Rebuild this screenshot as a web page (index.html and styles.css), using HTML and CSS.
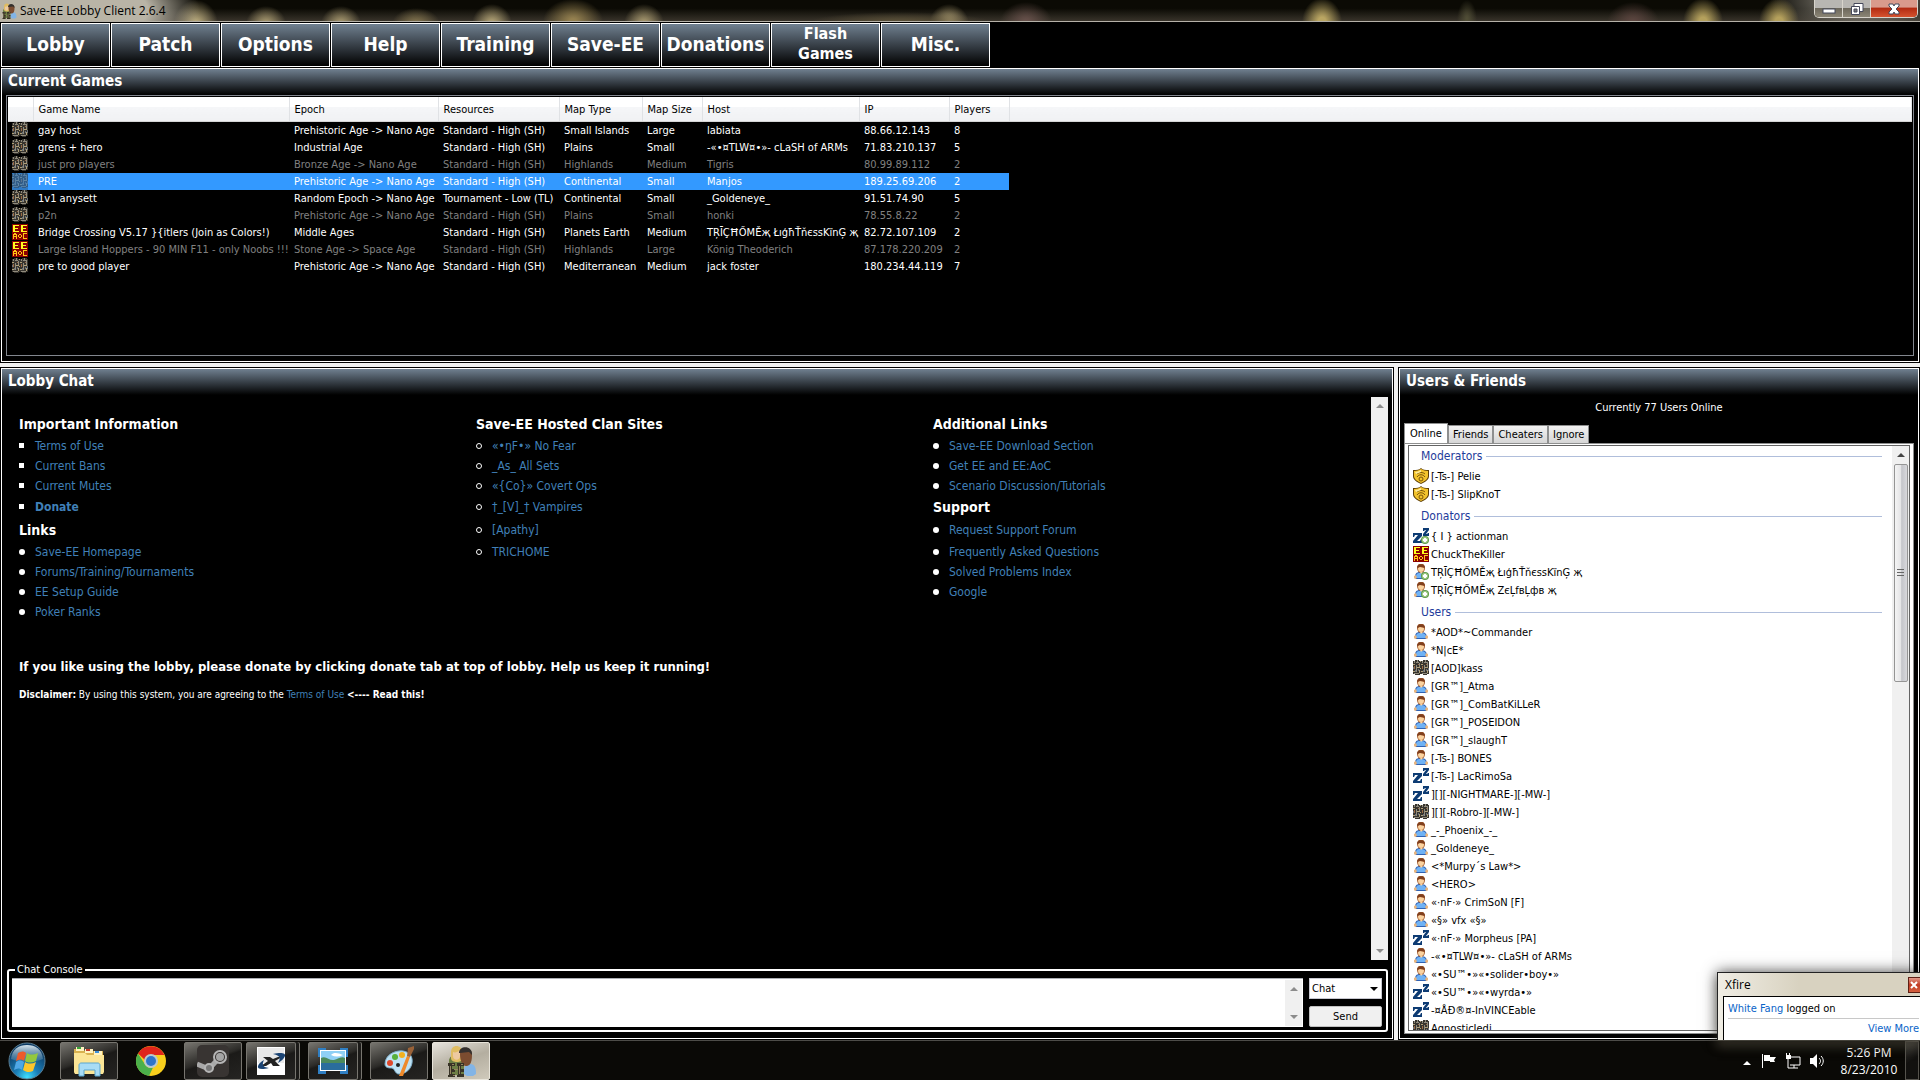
FILE: index.html
```html
<!DOCTYPE html>
<html lang="en">
<head>
    <meta charset="UTF-8">
    <meta name="viewport" content="width=device-width, initial-scale=1.0">
    <title>Save-EE Lobby Client 2.6.4</title>
    <link rel="stylesheet" href="styles.css">
</head>
<body>
    <!-- shared icons -->
    <svg class="sprite" aria-hidden="true">
        <symbol id="ee" viewBox="0 0 16 16">
            <path d="M0 1h2V0h4v1h4V0h5v1h1v13h-2v1h-4v-1H7v1H2v-1H0z" fill="#37342e"/>
            <path d="M1 1h1v2H1zM3 2h3v1H3zM4 0h1v2H4zM6 3h1v4H6zM9 1h1v2H9zM11 2h4v1h-4zM12 0h1v2h-1zM14 3h1v4h-1zM3 5h1v7H3zM11 5h1v7h-1zM1 13h5v1H1zM9 13h5v1H9z" fill="#8f8a7c"/>
            <path d="M0 4h2v1H0zM8 4h2v1H8zM4 7h3v1H4zM12 7h3v1h-3zM6 10h1v3H6zM14 10h1v3h-1zM0 11h2v1H0zM8 11h2v1H8zM7 1h1v1H7zM7 8h1v1H7z" fill="#b0a078"/>
            <path d="M1 6h1v3H1zM9 6h1v3H9zM5 4h1v1H5zM13 4h1v1h-1z" fill="#9c6a44"/>
            <path d="M5 9h1v2H5zM13 9h1v2h-1zM2 10h1v2H2zM10 10h1v2h-1zM0 7h1v2H0zM15 8h1v3h-1z" fill="#68707a"/>
        </symbol>
        <symbol id="aoc" viewBox="0 0 16 16">
            <rect width="16" height="16" fill="#8c0000"/>
            <path d="M1 1h6v1H3v2h3v1H3v2h4v1H1zM9 1h6v1h-4v2h3v1h-3v2h4v1H9z" fill="#ffff1e"/>
            <path d="M2 9h2v1h1v5H4v-2H2v2H1v-5h1zM2 11v1h2v-1zM7 10h2v1h1v2H9v1H7v-1H6v-2h1zM7 11v2h2v-2zM11 9h4v1h-3v4h3v1h-4z" fill="#ffc814"/>
        </symbol>
        <symbol id="user" viewBox="0 0 16 16">
            <path d="M2 14c0-4 1-6 5-6h1c4 0 6 2 6 6l-1 1H3z" fill="#2f62b4"/>
            <path d="M3 13c0-3 1-4 4-4h1c3 0 5 1 5 4l-1 1H4z" fill="#6fb2f5"/>
            <path d="M1 12l2-1 1 3-2 1-1-1zM15 12l-2-1-1 3 2 1 1-1z" fill="#e9b57e"/>
            <path d="M4 4c0-6 8-6 8 0 0 3-2 5-4 5S4 7 4 4z" fill="#a35b2d"/>
            <path d="M5 4l2-1 4 1c0 3-1 4-3 4S5 7 5 4z" fill="#fbd3a0"/>
            <path d="M4 4c0-5 8-5 8 0l-2-1H6z" fill="#7f3f1e"/>
            <path d="M7 8l1 2 2-2z" fill="#fbd3a0"/>
        </symbol>
        <symbol id="plus" viewBox="0 0 16 16">
            <circle cx="12" cy="12" r="4" fill="#5f9a48"/>
            <circle cx="12" cy="12" r="3" fill="#a8d08c"/>
            <path d="M11 10h2v1h1v2h-1v1h-2v-1h-1v-2h1z" fill="#fff"/>
        </symbol>
        <symbol id="user-plus" viewBox="0 0 16 16">
            <use href="#user"/><use href="#plus"/>
        </symbol>
        <symbol id="away" viewBox="0 0 16 16">
            <path d="M0 5h9v3l-5 5h3l1-2h1v4H0v-2l5-6H2L1 9H0z" fill="#0d3b73"/>
            <path d="M10 0h6v2l-3 4h1l1-1h1v3h-6V6l3-4h-1l-1 1h-1z" fill="#0d3b73"/>
        </symbol>
        <symbol id="away-plus" viewBox="0 0 16 16">
            <use href="#away"/><use href="#plus"/>
        </symbol>
        <symbol id="mod" viewBox="0 0 16 16">
            <path d="M0 2c4 0 6 0 8-2 2 2 4 2 8 2v6c0 4-4 6-8 8-4-2-8-4-8-8z" fill="#5c3d05"/>
            <path d="M1 3c3 0 5-1 7-2 2 1 4 2 7 2v5c0 3-3 5-7 7-4-2-7-4-7-7z" fill="#f2c32c"/>
            <path d="M4 6c2-2 6-2 8 0M4 9c2-3 6-3 8 0" fill="none" stroke="#7a5408"/>
            <path d="M2 4c2 0 4-1 6-2v2L3 6z" fill="#ffeb9a"/>
            <circle cx="8" cy="11" r="2" fill="none" stroke="#7a5408"/>
        </symbol>
        <symbol id="lobby" viewBox="0 0 32 32">
            <path d="M4 30V16c0-4 3-6 8-6s7 3 7 6v14z" fill="#6d7e45"/>
            <path d="M6 7c0-8 11-8 11 0v6c0 3-2 4-5 4s-6-1-6-4z" fill="#e0bd62"/>
            <path d="M8 7c2 1 5 0 7-2v6c0 5-7 5-7 0z" fill="#edc9a0"/>
            <path d="M19 29c0-7 1-10 6-10s6 4 6 10l-3 2h-6z" fill="#82b4e6"/>
            <path d="M15 9c0-8 13-7 12 1 0 9-3 11-6 11s-6-4-6-12z" fill="#7b4c30"/>
            <path d="M14 8c0-8 14-8 13 2l-3-3-9 1z" fill="#34302e"/>
            <path d="M3 18h7v3H7v3h3v3H7v2h3v3H3v-2h1V21H3zM12 18h7v3h-3v3h3v3h-3v2h3v3h-7v-2h1V21h-1z" fill="#373226"/>
            <path d="M5 21h1v8H5zM14 21h1v8h-1zM7 19h2v1H7zM16 19h2v1h-2zM8 30h2v1H8zM9 24h4v1H9z" fill="#958560"/>
        </symbol>
        <symbol id="up" viewBox="0 0 8 4"><path d="M4 0l4 4H0z" fill="currentColor"/></symbol>
        <symbol id="down" viewBox="0 0 8 4"><path d="M4 4L0 0h8z" fill="currentColor"/></symbol>
    </svg>

    <header class="titlebar">
        <svg class="app-icon"><use href="#lobby"/></svg>
        <h1>Save-EE Lobby Client 2.6.4</h1>
        <div class="window-buttons">
            <button type="button" class="win" aria-label="Minimize"><svg viewBox="0 0 14 12"><rect x="1" y="6" width="12" height="4" fill="#fff" stroke="#45485a"/></svg></button>
            <button type="button" class="win" aria-label="Restore"><svg viewBox="0 0 14 12"><path d="M4 .5h9v8H4z" fill="#fff" stroke="#45485a"/><path d="M1.500 3.500h8v8h-8z" fill="#fff" stroke="#45485a"/><path d="M4 6h3v3H4z" fill="#777" stroke="#45485a"/></svg></button>
            <button type="button" class="win win-close" aria-label="Close"><svg viewBox="0 0 14 12"><path d="M2 1h4l1 2 1-2h4v2L9 6l3 3v2H8L7 9l-1 2H2V9l3-3-3-3z" fill="#fff" stroke="#45485a"/></svg></button>
        </div>
    </header>

    <nav class="main-nav">
        <button type="button">Lobby</button>
        <button type="button">Patch</button>
        <button type="button">Options</button>
        <button type="button">Help</button>
        <button type="button">Training</button>
        <button type="button">Save-EE</button>
        <button type="button">Donations</button>
        <button type="button" class="two-line">Flash Games</button>
        <button type="button">Misc.</button>
    </nav>

    <main class="workspace">
        <section class="panel games">
            <h2>Current Games</h2>
            <div class="games-list">
                <table class="games-table">
                    <colgroup>
                        <col class="c-icon"><col class="c-name"><col class="c-epoch"><col class="c-res"><col class="c-type"><col class="c-size"><col class="c-host"><col class="c-ip"><col class="c-players"><col>
                    </colgroup>
                    <thead>
                        <tr><th></th><th>Game Name</th><th>Epoch</th><th>Resources</th><th>Map Type</th><th>Map Size</th><th>Host</th><th>IP</th><th>Players</th><th></th></tr>
                    </thead>
                    <tbody>
                        <tr><td><svg><use href="#ee"/></svg></td><td>gay host</td><td>Prehistoric Age -&gt; Nano Age</td><td>Standard - High (SH)</td><td>Small Islands</td><td>Large</td><td>labiata</td><td>88.66.12.143</td><td>8</td><td></td></tr>
                        <tr><td><svg><use href="#ee"/></svg></td><td>grens + hero</td><td>Industrial Age</td><td>Standard - High (SH)</td><td>Plains</td><td>Small</td><td>-«•¤TLW¤•»- cLaSH of ARMs</td><td>71.83.210.137</td><td>5</td><td></td></tr>
                        <tr class="started"><td><svg><use href="#ee"/></svg></td><td>just pro players</td><td>Bronze Age -&gt; Nano Age</td><td>Standard - High (SH)</td><td>Highlands</td><td>Medium</td><td>Tigris</td><td>80.99.89.112</td><td>2</td><td></td></tr>
                        <tr class="selected"><td><svg><use href="#ee"/></svg></td><td>PRE</td><td>Prehistoric Age -&gt; Nano Age</td><td>Standard - High (SH)</td><td>Continental</td><td>Small</td><td>Manjos</td><td>189.25.69.206</td><td>2</td><td></td></tr>
                        <tr><td><svg><use href="#ee"/></svg></td><td>1v1 anysett</td><td>Random Epoch -&gt; Nano Age</td><td>Tournament - Low (TL)</td><td>Continental</td><td>Small</td><td>_Goldeneye_</td><td>91.51.74.90</td><td>5</td><td></td></tr>
                        <tr class="started"><td><svg><use href="#ee"/></svg></td><td>p2n</td><td>Prehistoric Age -&gt; Nano Age</td><td>Standard - High (SH)</td><td>Plains</td><td>Small</td><td>honki</td><td>78.55.8.22</td><td>2</td><td></td></tr>
                        <tr><td><svg><use href="#aoc"/></svg></td><td>Bridge Crossing V5.17 }{itlers (Join as Colors!)</td><td>Middle Ages</td><td>Standard - High (SH)</td><td>Planets Earth</td><td>Medium</td><td>TŖĪÇĦŐMĚҗ ŁıģħŤňєssKїnĢ җ</td><td>82.72.107.109</td><td>2</td><td></td></tr>
                        <tr class="started"><td><svg><use href="#aoc"/></svg></td><td>Large Island Hoppers - 90 MIN F11 - only Noobs !!!</td><td>Stone Age -&gt; Space Age</td><td>Standard - High (SH)</td><td>Highlands</td><td>Large</td><td>König Theoderich</td><td>87.178.220.209</td><td>2</td><td></td></tr>
                        <tr><td><svg><use href="#ee"/></svg></td><td>pre to good player</td><td>Prehistoric Age -&gt; Nano Age</td><td>Standard - High (SH)</td><td>Mediterranean</td><td>Medium</td><td>jack foster</td><td>180.234.44.119</td><td>7</td><td></td></tr>
                    </tbody>
                </table>
            </div>
        </section>

        <section class="panel chat">
            <h2>Lobby Chat</h2>
            <div class="chat-log">
                <div class="chat-text">
                    <table class="links-table">
                        <tr class="tall"><th>Important Information</th><th>Save-EE Hosted Clan Sites</th><th>Additional Links</th></tr>
                        <tr><td class="square"><a href="#">Terms of Use</a></td><td class="ring"><a href="#">«•ŋF•» No Fear</a></td><td class="dot"><a href="#">Save-EE Download Section</a></td></tr>
                        <tr><td class="square"><a href="#">Current Bans</a></td><td class="ring"><a href="#">_As_ All Sets</a></td><td class="dot"><a href="#">Get EE and EE:AoC</a></td></tr>
                        <tr><td class="square"><a href="#">Current Mutes</a></td><td class="ring"><a href="#">«{Co}» Covert Ops</a></td><td class="dot"><a href="#">Scenario Discussion/Tutorials</a></td></tr>
                        <tr class="mid"><td class="square"><a href="#"><b>Donate</b></a></td><td class="ring"><a href="#">†_[V]_† Vampires</a></td><th>Support</th></tr>
                        <tr class="tall"><th>Links</th><td class="ring"><a href="#">[Apathy]</a></td><td class="dot"><a href="#">Request Support Forum</a></td></tr>
                        <tr><td class="dot"><a href="#">Save-EE Homepage</a></td><td class="ring"><a href="#">TRICHOME</a></td><td class="dot"><a href="#">Frequently Asked Questions</a></td></tr>
                        <tr><td class="dot"><a href="#">Forums/Training/Tournaments</a></td><td></td><td class="dot"><a href="#">Solved Problems Index</a></td></tr>
                        <tr><td class="dot"><a href="#">EE Setup Guide</a></td><td></td><td class="dot"><a href="#">Google</a></td></tr>
                        <tr><td class="dot"><a href="#">Poker Ranks</a></td><td></td><td></td></tr>
                    </table>
                    <p class="notice">If you like using the lobby, please donate by clicking donate tab at top of lobby. Help us keep it running!</p>
                    <p class="disclaimer"><b>Disclaimer:</b> By using this system, you are agreeing to the <a href="#">Terms of Use</a> <b>&lt;---- Read this!</b></p>
                </div>
                <div class="scrollbar"><svg><use href="#up"/></svg><svg><use href="#down"/></svg></div>
            </div>
            <fieldset class="console">
                <legend>Chat Console</legend>
                <div class="console-row">
                    <div class="message-box">
                        <textarea aria-label="Message"></textarea>
                        <div class="scrollbar"><svg><use href="#up"/></svg><svg><use href="#down"/></svg></div>
                    </div>
                    <div class="console-side">
                        <div class="select-wrap">
                            <select aria-label="Message type"><option>Chat</option></select>
                        </div>
                        <button type="button" class="send">Send</button>
                    </div>
                </div>
            </fieldset>
        </section>

        <section class="panel users">
            <h2>Users &amp; Friends</h2>
            <p class="count">Currently 77 Users Online</p>
            <div class="tabs">
                <button type="button" class="tab active">Online</button>
                <button type="button" class="tab">Friends</button>
                <button type="button" class="tab">Cheaters</button>
                <button type="button" class="tab">Ignore</button>
            </div>
            <div class="tab-page">
                <div class="user-box">
                    <div class="user-list">
                        <h3>Moderators</h3>
                        <ul>
                            <li><svg><use href="#mod"/></svg>[-Ts-] Pelie</li>
                            <li><svg><use href="#mod"/></svg>[-Ts-] SlipKnoT</li>
                        </ul>
                        <h3>Donators</h3>
                        <ul>
                            <li><svg><use href="#away-plus"/></svg>{ I } actionman</li>
                            <li><svg><use href="#aoc"/></svg>ChuckTheKiller</li>
                            <li><svg><use href="#user-plus"/></svg>TŖĪÇĦŐMĚҗ ŁıģħŤňєssKїnĢ җ</li>
                            <li><svg><use href="#user-plus"/></svg>TŖĪÇĦŐMĚҗ ZєĻfвĻфв җ</li>
                        </ul>
                        <h3>Users</h3>
                        <ul>
                            <li><svg><use href="#user"/></svg>*AOD*~Commander</li>
                            <li><svg><use href="#user"/></svg>*N|cE*</li>
                            <li><svg><use href="#ee"/></svg>[AOD]kass</li>
                            <li><svg><use href="#user"/></svg>[GR™]_Atma</li>
                            <li><svg><use href="#user"/></svg>[GR™]_ComBatKiLLeR</li>
                            <li><svg><use href="#user"/></svg>[GR™]_POSEIDON</li>
                            <li><svg><use href="#user"/></svg>[GR™]_slaughT</li>
                            <li><svg><use href="#user"/></svg>[-Ts-] BONES</li>
                            <li><svg><use href="#away"/></svg>[-Ts-] LacRimoSa</li>
                            <li><svg><use href="#away"/></svg>][][-NIGHTMARE-][-MW-]</li>
                            <li><svg><use href="#ee"/></svg>][][-Robro-][-MW-]</li>
                            <li><svg><use href="#user"/></svg>_-_Phoenix_-_</li>
                            <li><svg><use href="#user"/></svg>_Goldeneye_</li>
                            <li><svg><use href="#user"/></svg>&lt;*Murpy´s Law*&gt;</li>
                            <li><svg><use href="#user"/></svg>&lt;HERO&gt;</li>
                            <li><svg><use href="#user"/></svg>«·nF·» CrimSoN [F]</li>
                            <li><svg><use href="#user"/></svg>«§» vfx «§»</li>
                            <li><svg><use href="#away"/></svg>«·nF·» Morpheus [PA]</li>
                            <li><svg><use href="#user"/></svg>-«•¤TLW¤•»- cLaSH of ARMs</li>
                            <li><svg><use href="#user"/></svg>«•SU™•»«•solider•boy•»</li>
                            <li><svg><use href="#away"/></svg>«•SU™•»«•wyrda•»</li>
                            <li><svg><use href="#away"/></svg>-¤ÅÐ®¤-InVINCEable</li>
                            <li><svg><use href="#ee"/></svg>AgnosticJedi</li>
                        </ul>
                    </div>
                    <div class="scrollbar has-thumb"><svg><use href="#up"/></svg><div class="thumb"></div></div>
                </div>
            </div>
        </section>
    </main>

    <footer class="taskbar">
        <button type="button" class="start" aria-label="Start">
            <svg viewBox="0 0 38 38">
                <defs>
                    <radialGradient id="orb" cx=".5" cy=".95" r=".8"><stop offset="0" stop-color="#3fe0ff"/><stop offset=".4" stop-color="#1b7fb8"/><stop offset="1" stop-color="#0c3a63"/></radialGradient>
                    <linearGradient id="orbshine" x2="0" y2="1"><stop offset="0" stop-color="#d6e4ec"/><stop offset="1" stop-color="#7fa9c4" stop-opacity=".2"/></linearGradient>
                </defs>
                <circle cx="19" cy="19" r="18" fill="url(#orb)" stroke="#5a7d92"/>
                <path d="M3 17C4 7 11 3 19 3s15 4 16 14c-9 4-22 4-32 0z" fill="url(#orbshine)"/>
                <path d="M10 11c3-2 6-2 8 0l-2 8c-2-2-5-2-8 0z" fill="#ee5a2b"/>
                <path d="M19 11c3 2 6 2 11 0l-2 8c-4 2-8 2-11 0z" fill="#94c83d"/>
                <path d="M8 20c3-2 5-2 8 0l-2 8c-2-2-5-2-8 0z" fill="#4fa7e6"/>
                <path d="M17 20c3 2 7 2 11 0l-3 9c-4 2-7 1-10-1z" fill="#fdc62b"/>
            </svg>
        </button>
        <button type="button" class="task" aria-label="Windows Explorer">
            <svg viewBox="0 0 32 32">
                <path d="M1 4h9l2 2h18v21l-2 2H3l-2-2z" fill="#d9b250"/>
                <path d="M3 2h8v4H3zM12 4h8v4h-8zM21 6h8v4h-8z" fill="#fff3c2"/>
                <path d="M4 2h4v2H4z" fill="#3aa53c"/><path d="M13 4h4v2h-4z" fill="#c33b2a"/><path d="M22 6h4v2h-4z" fill="#3c8fd8"/>
                <path d="M1 8h11l2 2h17v17l-1 2H2l-1-2z" fill="#fbe596"/>
                <path d="M6 31V20c0-1 1-2 2-2h17c1 0 2 1 2 2v11h-5v-6H11v6z" fill="#a8dcf5" stroke="#5aa6cf"/>
            </svg>
        </button>
        <button type="button" class="task plain" aria-label="Google Chrome">
            <svg viewBox="0 0 32 32">
                <circle cx="16" cy="16" r="15" fill="#f8cf1c"/>
                <path d="M3 8.500A15 15 0 0 1 29.500 10H16a6 6 0 0 0-6 5z" fill="#e0251b"/>
                <path d="M3 8.500l7 11a7 7 0 0 0 8 3L14 31A15 15 0 0 1 3 8.500z" fill="#4bb04a"/>
                <circle cx="16" cy="16" r="7" fill="#b9c9d0"/><circle cx="16" cy="16" r="5" fill="#2f74c9"/>
            </svg>
        </button>
        <button type="button" class="task" aria-label="Steam">
            <svg viewBox="0 0 32 32">
                <rect width="32" height="32" rx="5" fill="#383432"/>
                <path d="M0 19l12 5 10-11" fill="none" stroke="#a9a9a9" stroke-width="5"/>
                <circle cx="23" cy="12" r="6" fill="#383432" stroke="#b5b5b5" stroke-width="2"/><circle cx="23" cy="12" r="4" fill="#a5a5a5"/>
                <circle cx="12" cy="23" r="4" fill="#777" stroke="#b5b5b5" stroke-width="2"/>
            </svg>
        </button>
        <button type="button" class="task stacked" aria-label="Xfire">
            <svg viewBox="0 0 32 32">
                <path d="M2 2h28v28H2z" fill="#fff"/><path d="M3 3h26v15H3z" fill="#e9e9e9"/>
                <path d="M8 12h7l3 2 5-2h4l-7 4 5 5h-7l-2-3-5 3H6l7-5z" fill="#222"/>
                <path d="M18 9c8-2 13-1 12 2s-4 5-7 7c2-4 4-7-5-9zM14 23c-8 2-12 1-11-2s3-4 6-6c-2 4-2 7 5 8z" fill="#1b4474"/>
            </svg>
        </button>
        <button type="button" class="task stacked" aria-label="Photo Viewer">
            <svg viewBox="0 0 32 32">
                <path d="M1 3h8v4H5v5H1zM31 3h-8v4h4v5h4zM1 29h8v-4H5v-5H1zM31 29h-8v-4h4v-5h4z" fill="#2f7fc4"/>
                <path d="M3 5h26v21H3z" fill="#fff"/><path d="M4 6h24v11H4z" fill="#8fd0f5"/>
                <path d="M4 13c5-3 8 3 13 2 4-1 8-4 11-2v6H4z" fill="#4b8a5c"/><path d="M4 18h24v7H4z" fill="#2a6d9c"/>
                <path d="M14 10c3-3 7-2 12 0-4 2-8 2-12 0z" fill="#fff"/>
            </svg>
        </button>
        <button type="button" class="task" aria-label="Paint">
            <svg viewBox="0 0 32 32">
                <path d="M2 19C2 10 12 5 20 6c7 1 10 6 9 12s-6 11-13 11c-4 0-4-5-7-6-3 0-7 0-7-4z" fill="#bfe2f4" stroke="#7fb0cc"/>
                <circle cx="7" cy="18" r="3" fill="#e0482c"/><circle cx="12" cy="12" r="3" fill="#57b03c"/><circle cx="19" cy="10" r="3" fill="#f2b01e"/><circle cx="15" cy="20" r="2" fill="#222"/>
                <path d="M16 31l8-20 3 1-7 19z" fill="#ee8a2b"/><path d="M24 11l1-8 6-2v3l-4 8z" fill="#9a6238"/>
            </svg>
        </button>
        <button type="button" class="task current" aria-label="Save-EE Lobby Client"><svg><use href="#lobby"/></svg></button>

        <div class="tray">
            <button type="button" class="tray-up" aria-label="Show hidden icons"><svg><use href="#up"/></svg></button>
            <svg viewBox="0 0 16 16"><path d="M1 1h1v14H1zM3 2h6v6H3zM9 4h6l-2 3 1 2H9z" fill="#fff"/></svg>
            <svg viewBox="0 0 16 16"><path d="M6 4h9v8H5M9 12v3M5 15h8M3 6v9h2" fill="none" stroke="#fff"/><path d="M1 2h5v4H1zM1 0h1v2H1zM4 0h1v2H4z" fill="#fff"/></svg>
            <svg viewBox="0 0 16 16"><path d="M1 5h3l4-4v14l-4-4H1z" fill="#fff"/><path d="M10 5c2 2 2 4 0 6M12 3c3 3 3 7 0 10" fill="none" stroke="#fff"/></svg>
            <div class="clock"><span>5:26 PM</span><span>8/23/2010</span></div>
            <button type="button" class="show-desktop" aria-label="Show desktop"></button>
        </div>
    </footer>

    <aside class="toast">
        <div class="toast-head"><span>Xfire</span><button type="button" aria-label="Close"><svg viewBox="0 0 10 10"><path d="M2 2l6 6M8 2L2 8" stroke="#fff" stroke-width="2"/></svg></button></div>
        <div class="toast-body">
            <p><a href="#">White Fang</a> logged on</p>
            <a href="#" class="more">View More</a>
        </div>
    </aside>
</body>
</html>
```
FILE: styles.css
```css
* {
    box-sizing: border-box;
}

body {
    margin: 0;
    height: 100vh;
    display: flex;
    flex-direction: column;
    overflow: hidden;
    background: #000;
    color: #fff;
    font-family: "DejaVu Sans Condensed", Tahoma, sans-serif;
    font-size: 11px;
}

h1, h2, h3, p, ul {
    margin: 0;
    padding: 0;
}

ul {
    list-style: none;
}

a {
    color: #4080b8;
    text-decoration: none;
}

button, select, textarea {
    font: inherit;
    border-radius: 0;
}

.sprite {
    position: absolute;
    width: 0;
    height: 0;
}

/* Title bar */
.titlebar {
    flex: none;
    display: flex;
    align-items: center;
    height: 22px;
    padding-left: 1px;
    border-bottom: 1px solid #b5b1a8;
    background:
        radial-gradient(ellipse 130px 50px at 70px 10px, #b9b4a6 60%, transparent 100%),
        radial-gradient(ellipse 22px 24px at 196px 24px, #b9aa7c 10%, transparent 100%),
        radial-gradient(ellipse 20px 18px at 266px 24px, #a99a70 10%, transparent 100%),
        radial-gradient(ellipse 20px 18px at 341px 24px, #a99a70 10%, transparent 100%),
        radial-gradient(ellipse 24px 16px at 416px 24px, #84754f 10%, transparent 100%),
        radial-gradient(ellipse 20px 20px at 492px 24px, #b5a577 10%, transparent 100%),
        radial-gradient(ellipse 30px 22px at 573px 21px, #94804f 10%, transparent 100%),
        radial-gradient(ellipse 20px 20px at 644px 24px, #a99a70 10%, transparent 100%),
        radial-gradient(ellipse 90px 10px at 900px 22px, #5a5038 10%, transparent 100%),
        radial-gradient(ellipse 20px 20px at 949px 24px, #bbaa7c 10%, transparent 100%),
        radial-gradient(ellipse 26px 20px at 1026px 22px, #66504a 10%, transparent 100%),
        radial-gradient(ellipse 20px 24px at 1322px 22px, #b9a562 20%, transparent 100%),
        radial-gradient(ellipse 10px 20px at 1467px 20px, #504d36 10%, transparent 100%),
        radial-gradient(ellipse 26px 20px at 1633px 22px, #5b453f 10%, transparent 100%),
        radial-gradient(ellipse 20px 24px at 1703px 22px, #b4a05c 20%, transparent 100%),
        radial-gradient(ellipse 20px 24px at 1779px 22px, #b4a05c 20%, transparent 100%),
        radial-gradient(ellipse 90px 40px at 1860px 0, #77736a 30%, transparent 100%),
        linear-gradient(#0b0a04 40%, #38332a);
}

.app-icon {
    width: 16px;
    height: 16px;
}

.titlebar h1 {
    flex: 1;
    padding-left: 3px;
    color: #000;
    font: 12px "Open Sans", "Segoe UI", sans-serif;
}

.window-buttons {
    align-self: flex-start;
    display: flex;
    height: 18px;
    margin-right: 2px;
    border: 1px solid #d8d4cc;
    border-top: 0;
    border-radius: 0 0 5px 5px;
    overflow: hidden;
}

.win {
    width: 28px;
    padding: 0;
    border: 0;
    border-right: 1px solid #d8d4cc;
    background: linear-gradient(#b8b6b2 45%, #6d685c 50%, #8b8575);
}

.win svg {
    display: block;
    width: 14px;
    height: 12px;
    margin: 0 auto;
}

.win-close {
    width: 46px;
    border-right: 0;
    background: linear-gradient(#d99a8c 40%, #b32c13 50%, #d5532f);
}

/* Main buttons */
.main-nav {
    flex: none;
    display: flex;
    gap: 1px;
    padding: 1px 0 0 1px;
}

.main-nav button {
    width: 109px;
    height: 44px;
    padding: 0 0 2px;
    border: 1px solid #fff;
    background: linear-gradient(#708090, #000);
    color: #fff;
    font-size: 19px;
    font-weight: bold;
}

.main-nav .two-line {
    padding: 0 16px 2px;
    font-size: 16px;
    line-height: 20px;
}

/* Panels */
.workspace {
    flex: 1;
    min-height: 0;
    display: grid;
    grid-template-columns: minmax(0, 1fr) 522px;
    grid-template-rows: minmax(0, 296fr) minmax(0, 673fr);
    gap: 4px;
    background: #f0f0f0;
}

.panel {
    display: flex;
    flex-direction: column;
    min-width: 0;
    padding: 1px;
    border: 1px solid #000;
    background: #000;
    box-shadow: inset 0 0 0 1px #fff;
}

.panel h2 {
    flex: none;
    height: 26px;
    padding-left: 6px;
    background: linear-gradient(#708090, #000);
    font-size: 15px;
    line-height: 25px;
}

.games {
    grid-column: 1 / 3;
}

.games-list {
    flex: 1;
    min-height: 0;
    margin: 0 4px 5px;
    padding: 1px;
    border: 1px solid #82868e;
    overflow: hidden;
}

.games-table {
    width: 100%;
    table-layout: fixed;
    border-collapse: collapse;
}

.c-icon { width: 25px; }
.c-name { width: 256px; }
.c-epoch { width: 149px; }
.c-res { width: 121px; }
.c-type { width: 83px; }
.c-size { width: 60px; }
.c-host { width: 157px; }
.c-ip { width: 90px; }
.c-players { width: 60px; }

.games-table th {
    height: 24px;
    padding: 1px 0 0 5px;
    border-right: 1px solid #e0e2e5;
    border-bottom: 1px solid #d5d5d5;
    background: linear-gradient(#fff 40%, #f5f6f8 41%, #f0f1f3);
    color: #000;
    font-weight: normal;
    text-align: left;
}

.games-table td {
    height: 17px;
    padding: 0 0 0 5px;
    line-height: 17px;
    white-space: nowrap;
}

.games-table td:first-child {
    padding: 0 0 0 4px;
}

.games-table svg {
    display: block;
    width: 16px;
    height: 16px;
}

.games-table .started {
    color: #808080;
}

.selected td {
    background: #3399ff;
}

.selected td:first-child {
    background: linear-gradient(to left, #3399ff 5px, #2f78c0 5px, #2f78c0 21px, #000 21px);
}

.selected td:last-child {
    background: none;
}

.selected svg {
    opacity: 0.4;
}

/* Scroll bars */
.scrollbar {
    flex: none;
    display: flex;
    flex-direction: column;
    justify-content: space-between;
    align-items: center;
    width: 17px;
    padding: 7px 0;
    background: #f0f0f0;
    color: #8c8c8c;
}

.scrollbar svg {
    width: 8px;
    height: 4px;
}

.has-thumb {
    justify-content: flex-start;
    gap: 7px;
    color: #444;
}

.thumb {
    width: 14px;
    height: 218px;
    border: 1px solid #959595;
    border-radius: 2px;
    background:
        repeating-linear-gradient(#666 0 1px, transparent 1px 3px) center / 7px 9px no-repeat,
        linear-gradient(to right, #f4f4f4, #e4e4e6 50%, #c4c5ca 55%, #d8d8dc);
}

/* Chat */
.chat-log {
    flex: 1;
    min-height: 0;
    display: flex;
    margin: 2px 4px 0 4px;
}

.chat-text {
    flex: 1;
    padding: 15px 0 0 13px;
    overflow: hidden;
}

.links-table {
    width: 100%;
    table-layout: fixed;
    border-collapse: collapse;
    font-size: 12px;
}

.links-table tr {
    height: 20px;
}

.links-table .mid {
    height: 22px;
}

.links-table .tall {
    height: 24px;
}

.links-table th, .links-table td {
    width: 457px;
    padding: 0;
    text-align: left;
}

.links-table th:last-child, .links-table td:last-child {
    width: auto;
}

.links-table th {
    font-size: 14px;
}

.links-table td::before {
    box-sizing: border-box;
    display: inline-block;
    width: 6px;
    height: 6px;
    margin-right: 10px;
    vertical-align: 1px;
}

.square::before {
    content: "";
    background: #fff;
    clip-path: inset(0 1px 1px 0);
}

.dot::before {
    content: "";
    border-radius: 50%;
    background: #fff;
}

.ring::before {
    content: "";
    border: 1px solid #fff;
    border-radius: 50%;
}

.notice {
    padding-top: 36px;
    font-size: 13px;
    font-weight: bold;
    line-height: 18px;
}

.disclaimer {
    padding-top: 11px;
    font-size: 10px;
    line-height: 16px;
}

.console {
    flex: none;
    min-width: 0;
    margin: 3px 4px 6px 5px;
    padding: 1px 4px 3px 3px;
    border: 2px solid #fff;
    border-radius: 3px;
}

.console legend {
    margin-left: 3px;
    padding: 0 2px;
    line-height: 14px;
}

.console-row {
    display: flex;
    gap: 6px;
}

.message-box {
    flex: 1;
    display: flex;
    height: 49px;
    padding: 1px;
    border-top: 1px solid #abadb3;
    background: #fff;
}

.message-box textarea {
    flex: 1;
    border: 0;
    outline: none;
    resize: none;
    background: #fff;
    overflow: hidden;
}

.console-side {
    display: flex;
    flex-direction: column;
    gap: 7px;
    width: 73px;
}

.select-wrap {
    position: relative;
}

.select-wrap::after {
    content: "";
    position: absolute;
    top: 9px;
    right: 4px;
    border: 4px solid transparent;
    border-top-color: #000;
    border-bottom: 0;
    pointer-events: none;
}

.select-wrap select {
    display: block;
    width: 100%;
    height: 21px;
    padding: 0 2px;
    border: 1px solid #c8c8d0;
    appearance: none;
    background: #fff;
    color: #000;
}

.send {
    height: 21px;
    padding: 0;
    border: 1px solid #c0c0c0;
    border-radius: 2px;
    background: #f0f0f0;
    color: #000;
}

/* Users */
.count {
    padding-top: 1px;
    line-height: 23px;
    text-align: center;
}

.tabs {
    flex: none;
    display: flex;
    align-items: flex-end;
    height: 24px;
    padding-left: 4px;
}

.tab {
    height: 18px;
    padding: 0 4px;
    border: 1px solid #8e8f8f;
    border-bottom: 0;
    background: linear-gradient(#f2f2f2, #d6d6d6);
    color: #000;
    line-height: 16px;
}

.tab.active {
    height: 20px;
    padding: 0 5px;
    background: #fff;
}

.tab-page {
    flex: 1;
    min-height: 0;
    display: flex;
    margin: 0 4px 4px;
    padding: 1px 3px 2px;
    border: 1px solid #8e8f8f;
    background: #fff;
}

.user-box {
    flex: 1;
    min-width: 0;
    display: flex;
    border: 1px solid #646464;
    color: #000;
}

.user-list {
    flex: 1;
    min-width: 0;
    overflow: hidden;
}

.user-list h3 {
    display: flex;
    align-items: center;
    gap: 4px;
    height: 21px;
    padding: 0 10px 1px 12px;
    color: #1e3c9b;
    font-size: 12px;
    font-weight: normal;
}

.user-list h3::after {
    content: "";
    flex: 1;
    height: 1px;
    background: #b0bedb;
}

.user-list ul {
    padding-bottom: 3px;
}

.user-list li {
    display: flex;
    align-items: center;
    gap: 2px;
    height: 18px;
    padding-left: 4px;
    white-space: nowrap;
}

.user-list li svg {
    flex: none;
    width: 16px;
    height: 16px;
}

/* Taskbar */
.taskbar {
    flex: none;
    display: flex;
    align-items: center;
    height: 40px;
    border-top: 1px solid #4d4c48;
    background: #0a0906;
    font-family: "Open Sans", "Segoe UI", sans-serif;
    font-size: 12px;
}

.start {
    width: 54px;
    padding: 0;
    border: 0;
    background: none;
}

.start svg {
    display: block;
    width: 38px;
    height: 38px;
    margin-left: 8px;
}

.task {
    width: 58px;
    height: 38px;
    margin-left: 4px;
    padding: 0;
    border: 1px solid #77756f;
    border-radius: 2px;
    background: linear-gradient(160deg, #77756f, #2c2b28 45%, #1b1a18 50%, #252422);
}

.start + .task {
    margin-left: 6px;
}

.task svg {
    display: block;
    width: 32px;
    height: 32px;
    margin: 0 auto;
}

.task.plain {
    border-color: transparent;
    background: none;
}

.task.stacked {
    width: 50px;
    margin-right: 8px;
    box-shadow: 3px 0 0 #1b1a18, 4px 0 0 #77756f;
}

.task.current {
    border-color: #e8e4da;
    background: linear-gradient(160deg, #e6e3dc, #b4aea0 50%, #cfc9bb);
}

.tray {
    display: flex;
    align-items: center;
    align-self: stretch;
    margin-left: auto;
}

.tray > svg {
    width: 16px;
    height: 16px;
    margin-right: 8px;
}

.tray-up {
    width: 28px;
    padding: 0;
    border: 0;
    background: none;
    color: #fff;
}

.tray-up svg {
    width: 8px;
    height: 4px;
}

.clock {
    display: flex;
    flex-direction: column;
    width: 72px;
    line-height: 17px;
    text-align: center;
}

.show-desktop {
    align-self: stretch;
    width: 14px;
    margin-right: 1px;
    padding: 0;
    border: 1px solid #55534d;
    background: linear-gradient(150deg, #3d3c38, #12110f 50%);
}

/* Xfire pop-up over the bottom right corner */
.toast {
    position: absolute;
    right: 0;
    bottom: 40px;
    width: 203px;
    height: 68px;
    padding-left: 5px;
    border-top: 1px solid #222;
    border-left: 1px solid #222;
    background: linear-gradient(to right, #f0ede4, #d8d2c0 40%);
    box-shadow: 0 0 14px rgba(0, 0, 0, 0.7), 0 6px 10px rgba(150, 140, 115, 0.4);
    color: #000;
}

.toast-head {
    display: flex;
    align-items: center;
    justify-content: space-between;
    height: 23px;
    padding-left: 2px;
    font: 12px "Open Sans", "Segoe UI", sans-serif;
}

.toast-head button {
    width: 12px;
    height: 16px;
    padding: 0;
    border: 1px solid #5e2014;
    border-right: 0;
    background: linear-gradient(#e39a8a, #c23a22 50%, #d4603f);
}

.toast-head svg {
    display: block;
    width: 10px;
    height: 10px;
}

.toast-body {
    height: 44px;
    padding: 2px 1px 0 4px;
    border-top: 1px solid #000;
    border-left: 1px solid #000;
    background: #fff;
    line-height: 19px;
}

.toast-body a {
    color: #0a64c8;
}

.toast-body p {
    border-bottom: 1px solid #c8c8c8;
}

.toast-body .more {
    display: block;
    text-align: right;
}
```
